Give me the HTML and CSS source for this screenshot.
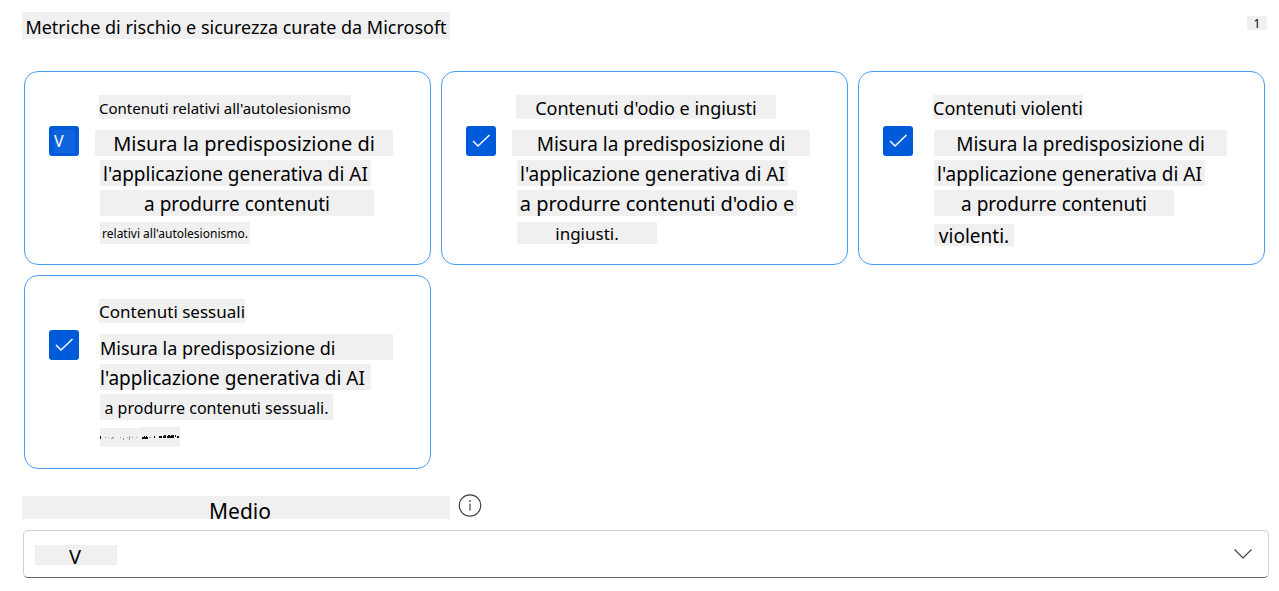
FILE: index.html
```html
<!DOCTYPE html>
<html lang="it">
<head>
<meta charset="utf-8">
<title>Metriche di rischio e sicurezza</title>
<link rel="stylesheet" href="styles.css">
</head>
<body>
<main class="page">
  <header class="header">
    <h1 class="mark heading">Metriche di rischio e sicurezza curate da Microsoft</h1>
    <span class="mark count">1</span>
  </header>

  <section class="cards">
    <label class="card" for="self-harm">
      <span class="check">
        <input class="box" type="checkbox" id="self-harm" checked>
        <span class="letter">V</span>
      </span>
      <span class="text">
        <span class="title"><span class="mark t15">Contenuti relativi all'autolesionismo</span></span>
        <span class="line wide"><span class="mark t20 w298">Misura la predisposizione di</span></span>
        <span class="line"><span class="mark t19 w271">l'applicazione generativa di AI</span></span>
        <span class="line"><span class="mark t19 w274">a produrre contenuti</span></span>
        <span class="line"><span class="mark t12 w150">relativi all'autolesionismo.</span></span>
      </span>
    </label>

    <label class="card" for="hate">
      <span class="check">
        <input class="box" type="checkbox" id="hate" checked>
        <svg class="tick" viewBox="0 0 30 30" aria-hidden="true"><path d="M7 15l5 5L23.500 9"/></svg>
      </span>
      <span class="text">
        <span class="title"><span class="mark t18 w260">Contenuti d'odio e ingiusti</span></span>
        <span class="line wide"><span class="mark t19 w298">Misura la predisposizione di</span></span>
        <span class="line"><span class="mark t19 w271">l'applicazione generativa di AI</span></span>
        <span class="line"><span class="mark t20 w280">a produrre contenuti d'odio e</span></span>
        <span class="line"><span class="mark t17 w140">ingiusti.</span></span>
      </span>
    </label>

    <label class="card" for="violence">
      <span class="check">
        <input class="box" type="checkbox" id="violence" checked>
        <svg class="tick" viewBox="0 0 30 30" aria-hidden="true"><path d="M7 15l5 5L23.500 9"/></svg>
      </span>
      <span class="text">
        <span class="title"><span class="mark t18">Contenuti violenti</span></span>
        <span class="line"><span class="mark t19 w293">Misura la predisposizione di</span></span>
        <span class="line"><span class="mark t19 w271">l'applicazione generativa di AI</span></span>
        <span class="line"><span class="mark t19 w240">a produrre contenuti</span></span>
        <span class="line low"><span class="mark t19 w80">violenti.</span></span>
      </span>
    </label>

    <label class="card" for="sexual">
      <span class="check">
        <input class="box" type="checkbox" id="sexual" checked>
        <svg class="tick" viewBox="0 0 30 30" aria-hidden="true"><path d="M7 15l5 5L23.500 9"/></svg>
      </span>
      <span class="text">
        <span class="title"><span class="mark t17">Contenuti sessuali</span></span>
        <span class="line"><span class="mark t18 w293 start">Misura la predisposizione di</span></span>
        <span class="line"><span class="mark t19 w271 start">l'applicazione generativa di AI</span></span>
        <span class="line"><span class="mark t16 w233">a produrre contenuti sessuali.</span></span>
        <span class="line">
          <svg class="specks" viewBox="0 0 80 20" aria-hidden="true">
            <path class="paper" d="M0 1h40V0h40v20H40v1H0z"/>
            <path class="ink" d="M0 9h1v3H0zM42 10h2v-1h1v1h1v-1h1v1h1v2h-6zM54 9h1v2h-1zM59 9h3v2h-3zM63 9h1v-1h2v3h-3zM67 9h1V8h2v3h-3zM71 8h3v3h-4v-2h1zM75 8h1v2h-1zM77 9h2v2h-2z"/>
            <path class="faint" d="M5 10h1v1H5zM8 10h1v1H8zM11 11h1v-1h2v1h-1v1h-2zM20 10h1v1h-1zM23 11h1v2h-1zM27 10h1v1h-1zM29 9h1v4h-1zM32 10h1v1h-1zM36 10h1v1h-1zM49 10h2v1h-2z"/>
          </svg>
        </span>
      </span>
    </label>
  </section>

  <section class="field">
    <div class="field-head">
      <label class="mark field-label" for="level">Medio</label>
      <svg class="info" viewBox="0 0 24 24" aria-hidden="true"><circle cx="12" cy="11.500" r="10.700"/><path d="M12 9.500v7"/><circle class="dot" cx="12" cy="7" r=".9"/></svg>
    </div>
    <div class="select-wrap">
      <select class="select" id="level"><option>V</option></select>
      <svg class="chevron" viewBox="0 0 18 10" aria-hidden="true"><path d="M.5.5L9 9l8.500-8.500"/></svg>
    </div>
  </section>
</main>
</body>
</html>
```

FILE: styles.css
```css
* { box-sizing: border-box; }

body {
  margin: 0;
  background: #fff;
  color: #000;
  font-family: "Noto Sans", "Open Sans", sans-serif;
}

.page { padding: 12px 10px 13px 22px; }

.mark {
  display: block;
  background: #f0f0f0;
  line-height: 24px;
  text-align: center;
  white-space: nowrap;
}

.header {
  display: flex;
  justify-content: space-between;
  align-items: flex-start;
  margin: 0 2px 32px 0;
}

.heading {
  width: 428px;
  margin: 0;
  padding: 4px 0 0;
  font-size: 18px;
  font-weight: 400;
  line-height: 23px;
}

.count {
  width: 20px;
  margin-top: 4px;
  padding-top: 2px;
  font-size: 12px;
  line-height: 12px;
}

.cards {
  display: grid;
  grid-template-columns: repeat(3, 1fr);
  gap: 10px;
  margin: 0 4px 0 2px;
}

.card {
  display: flex;
  align-items: flex-start;
  gap: 16px;
  padding: 20px 24px 16px;
  border: 1px solid #479ef5;
  border-radius: 14px;
}

.check {
  display: grid;
  flex: none;
  width: 30px;
  height: 30px;
  margin-top: 34px;
}

.check > * { grid-area: 1 / 1; }

.box {
  appearance: none;
  width: 30px;
  height: 30px;
  margin: 0;
  border-radius: 3px;
  background: #005bdb;
}

.tick {
  z-index: 1;
  fill: none;
  stroke: #fff;
  stroke-width: 1.500;
}

.letter {
  z-index: 1;
  width: 21px;
  margin: 4px 5px 3px;
  background: #0f64dd;
  color: #fff;
  font-size: 16px;
  line-height: 23px;
}

.text { min-width: 0; }

.title,
.line {
  display: flex;
  align-items: center;
  height: 30px;
  padding-left: 5px;
}

.line .mark { padding-top: 2px; }

.title {
  margin-bottom: 6px;
  padding-left: 4px;
}

.title .mark {
  padding-top: 2px;
  line-height: 22px;
}

.wide { padding-left: 0; }
.low { padding-top: 4px; }
.low .mark { line-height: 20px; }

.t12 { font-size: 12px; line-height: 20px; }
.t15 { font-size: 15px; }
.t16 { font-size: 16px; }
.t17 { font-size: 17px; }
.line .t17 { line-height: 20px; }
.t18 { font-size: 18px; }
.t19 { font-size: 19px; }
.t20 { font-size: 20px; }

.w80 { width: 80px; }
.w140 { width: 140px; }
.w150 { width: 150px; }
.w233 { width: 233px; }
.w240 { width: 240px; }
.w260 { width: 260px; }
.w271 { width: 271px; }
.w274 { width: 274px; }
.w280 { width: 280px; }
.w293 { width: 293px; }
.w298 { width: 298px; }
.start { text-align: left; }

.specks {
  width: 80px;
  height: 20px;
}

.paper { fill: #f0f0f0; }
.ink { fill: #111; }
.faint { fill: #999; }

.field { margin-top: 24px; }

.field-head {
  display: flex;
  align-items: center;
  gap: 8px;
}

.field-label {
  width: 428px;
  height: 23px;
  margin-top: 3px;
  padding: 4px 0 0 8px;
  font-size: 21px;
  line-height: 23px;
}

.info {
  width: 24px;
  height: 24px;
  fill: none;
  stroke: #424242;
  stroke-width: 1.200;
}

.dot {
  fill: #424242;
  stroke: none;
}

.select-wrap {
  display: grid;
  align-items: center;
  margin: 11px 0 0 1px;
}

.select-wrap > * { grid-area: 1 / 1; }

.select {
  appearance: none;
  width: 100%;
  height: 48px;
  padding: 5px 40px 0 45px;
  border: 1px solid #d1d1d1;
  border-bottom-color: #616161;
  border-radius: 5px;
  background: linear-gradient(#f0f0f0, #f0f0f0) 11px 14px / 82px 20px no-repeat #fff;
  color: #000;
  font-family: inherit;
  font-size: 20px;
}

.chevron {
  z-index: 1;
  justify-self: end;
  width: 18px;
  height: 10px;
  margin-right: 17px;
  fill: none;
  stroke: #424242;
  stroke-width: 1.200;
  pointer-events: none;
}
```
